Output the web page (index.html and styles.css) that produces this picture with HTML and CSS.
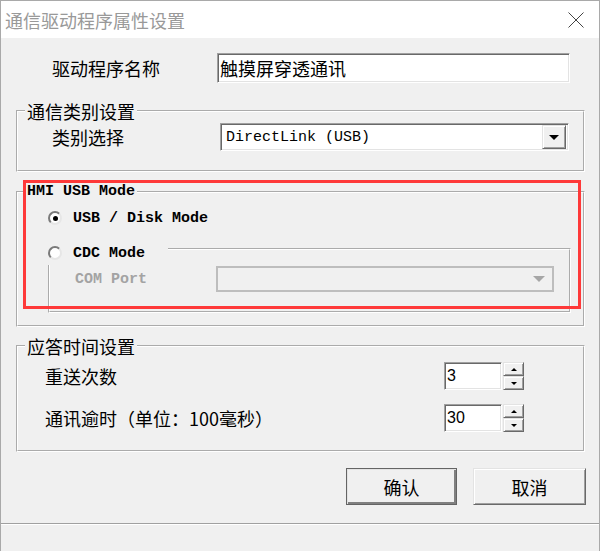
FILE: index.html
```html
<!DOCTYPE html>
<html lang="zh-CN">
  <head>
    <meta charset="UTF-8" />
    <meta name="viewport" content="width=device-width, initial-scale=1.0" />
    <title>通信驱动程序属性设置</title>
    <link rel="stylesheet" href="styles.css">
  </head>
  <body>
    <div class="window">
      <!-- Title bar -->
      <div class="titlebar">
        <span class="title">通信驱动程序属性设置</span>
        <svg class="close" width="16" height="16" viewBox="0 0 16 16">
          <path d="M0.5 0.5 L15.5 15.5 M15.5 0.5 L0.5 15.5" stroke="#444" stroke-width="1" fill="none" />
        </svg>
      </div>

      <div class="dialog">
        <div class="name-row">
          <span class="label name-label">驱动程序名称</span>
          <input type="text" class="sunken name-box" value="触摸屏穿透通讯" />
        </div>

        <fieldset class="group group-type">
          <legend>通信类别设置</legend>
          <div class="type-body">
            <span class="label type-label">类别选择</span>
            <div class="combo sunken">
              <span class="combo-text mono">DirectLink (USB)</span>
              <span class="combo-btn">
                <svg width="10" height="5" viewBox="0 0 10 5"><polygon points="0,0 10,0 5,5" fill="#000" /></svg>
              </span>
            </div>
          </div>
        </fieldset>

        <fieldset class="group group-usb">
          <legend class="mono bold">HMI USB Mode</legend>
          <div class="usb-body">
            <label class="radio mono bold"><span class="dot checked"></span>USB / Disk Mode</label>
            <div class="subgroup">
              <label class="radio mono bold cdc"><span class="dot"></span>CDC Mode</label>
              <div class="com-row">
                <span class="mono bold disabled com-label">COM Port</span>
                <div class="combo-off">
                  <svg width="12" height="6" viewBox="0 0 12 6"><polygon points="0,0 12,0 6,6" fill="#a6a6a6" /></svg>
                </div>
              </div>
            </div>
          </div>
        </fieldset>

        <fieldset class="group group-time">
          <legend>应答时间设置</legend>
          <div class="time-body">
            <div class="spin-row">
              <span class="label time-label">重送次数</span>
              <input type="text" class="sunken spin-input" value="3" />
              <div class="spin-btns">
                <span class="spin-btn"><span class="up"></span></span>
                <span class="spin-btn"><span class="down"></span></span>
              </div>
            </div>
            <div class="spin-row">
              <span class="label time-label">通讯逾时（单位：100毫秒）</span>
              <input type="text" class="sunken spin-input" value="30" />
              <div class="spin-btns">
                <span class="spin-btn"><span class="up"></span></span>
                <span class="spin-btn"><span class="down"></span></span>
              </div>
            </div>
          </div>
        </fieldset>

        <div class="button-row">
          <button class="btn default">确认</button>
          <button class="btn">取消</button>
        </div>
      </div>

      <div class="status"></div>

      <!-- red marker drawn over the USB mode group -->
      <div class="highlight"></div>
    </div>
  </body>
</html>
```

FILE: styles.css
```css
body {
  margin: 0;
  background: #fff;
  font-family: "Noto Sans CJK SC", sans-serif;
  color: #000;
}

.window {
  position: relative;
  width: 600px;
  height: 551px;
  box-sizing: border-box;
  border: 1px solid #a9a9a9;
  border-bottom: none;
  background: #f0f0f0;
}

.titlebar {
  height: 37px;
  background: #fff;
  display: flex;
  align-items: center;
  justify-content: space-between;
  padding: 0 15px 0 4px;
}

.title {
  font-size: 18px;
  line-height: 20px;
  color: #999;
}

.dialog {
  height: 485px;
  box-sizing: border-box;
  padding: 15px 0 0 15px;
}

.label {
  font-size: 18px;
  line-height: 20px;
  flex-shrink: 0;
}

.mono {
  font-family: "Liberation Mono", monospace;
  font-size: 15px;
}

.bold {
  font-weight: bold;
}

.disabled {
  color: #a3a3a3;
}

.sunken {
  box-sizing: border-box;
  border: 1px solid;
  border-color: #a0a0a0 #fff #fff #a0a0a0;
  box-shadow: inset 1px 1px 0 #696969, inset -1px -1px 0 #e3e3e3;
  background: #fff;
  outline: none;
  margin: 0;
}

/* name row */
.name-row {
  display: flex;
  align-items: center;
  height: 30px;
  padding-left: 36px;
}

.name-label {
  width: 165px;
}

.name-box {
  width: 353px;
  height: 30px;
  padding: 0 0 0 2px;
  font-family: "Noto Sans CJK SC", sans-serif;
  font-size: 18px;
}

/* group boxes */
.group {
  width: 569px;
  box-sizing: border-box;
  min-width: 0;
  margin: 0;
  padding: 0;
  border: 2px groove #fff;
}

.group legend {
  font-size: 18px;
  line-height: 20px;
  padding: 0 2px;
  margin-left: 7px;
  background: #f0f0f0;
}

.group legend.mono {
  font-size: 15px;
}

.group-type {
  margin-top: 18px;
}

.type-body {
  display: flex;
  align-items: center;
  padding: 2px 0 19px 34px;
}

.type-label {
  width: 168px;
}

.combo {
  width: 349px;
  height: 28px;
  display: flex;
  align-items: center;
  justify-content: space-between;
  padding: 2px;
}

.combo-text {
  padding-left: 3px;
}

.combo-btn {
  width: 24px;
  height: 24px;
  box-sizing: border-box;
  display: flex;
  align-items: center;
  justify-content: center;
  background: #f0f0f0;
  border: 1px solid;
  border-color: #e3e3e3 #696969 #696969 #e3e3e3;
  box-shadow: inset 1px 1px 0 #fff, inset -1px -1px 0 #a0a0a0;
}

/* usb mode */
.group-usb {
  margin-top: 10px;
}

.usb-body {
  padding: 6px 0 12px 30px;
}

.radio {
  display: flex;
  align-items: center;
  height: 20px;
  gap: 11px;
}

.dot {
  position: relative;
  width: 14px;
  height: 14px;
  box-sizing: border-box;
  border-radius: 50%;
  border: 2px solid;
  border-color: #7a7a7a #e6e6e6 #e6e6e6 #7a7a7a;
  background: #fff;
  flex-shrink: 0;
}

.dot.checked::after {
  content: "";
  position: absolute;
  left: 2.5px;
  top: 2.5px;
  width: 5px;
  height: 5px;
  border-radius: 50%;
  background: #000;
}

.subgroup {
  width: 523px;
  box-sizing: border-box;
  margin-top: 20px;
  border: 2px groove #fff;
  padding-bottom: 19px;
}

.radio.cdc {
  width: 120px;
  height: 24px;
  margin: -9px 0 0 -3px;
  padding-left: 1px;
  background: #f0f0f0;
}

.com-row {
  display: flex;
  align-items: center;
  height: 26px;
  margin-top: 1px;
  padding-left: 25px;
}

.com-label {
  width: 141px;
}

.combo-off {
  width: 338px;
  height: 26px;
  box-sizing: border-box;
  border: 2px solid #bdbdbd;
  display: flex;
  align-items: center;
  justify-content: flex-end;
  padding-right: 7px;
}

/* time settings */
.group-time {
  margin-top: 9px;
}

.time-body {
  display: flex;
  flex-direction: column;
  gap: 14px;
  padding: 6px 0 18px 27px;
}

.spin-row {
  display: flex;
  align-items: center;
  height: 28px;
}

.time-label {
  width: 399px;
}

.spin-input {
  width: 58px;
  height: 28px;
  padding: 0 0 0 2px;
  font-family: "Liberation Sans", sans-serif;
  font-size: 16px;
}

.spin-btns {
  display: flex;
  flex-direction: column;
  margin-left: 1px;
  height: 28px;
}

.spin-btn {
  width: 21px;
  height: 14px;
  box-sizing: border-box;
  display: flex;
  align-items: center;
  justify-content: center;
  border: 1px solid;
  border-color: #e3e3e3 #696969 #696969 #e3e3e3;
  box-shadow: inset 1px 1px 0 #fff, inset -1px -1px 0 #a0a0a0;
}

.up,
.down {
  width: 0;
  height: 0;
  border-left: 3px solid transparent;
  border-right: 3px solid transparent;
}

.up {
  border-bottom: 3px solid #000;
}

.down {
  border-top: 3px solid #000;
}

/* buttons */
.button-row {
  display: flex;
  gap: 16px;
  margin-top: 16px;
  padding-left: 330px;
}

.btn {
  height: 37px;
  width: 113px;
  font-family: "Noto Sans CJK SC", sans-serif;
  font-size: 18px;
  background: #f0f0f0;
  color: #000;
  padding: 0;
  border: 1px solid;
  border-color: #e3e3e3 #696969 #696969 #e3e3e3;
  box-shadow: inset 1px 1px 0 #fff, inset -1px -1px 0 #a0a0a0;
}

.btn.default {
  width: 111px;
  border: 1px solid #646464;
  box-shadow: inset 1px 1px 0 #e3e3e3, inset -2px -2px 0 #808080;
}

.status {
  height: 28px;
  box-sizing: border-box;
  border-top: 1px solid #a0a0a0;
  box-shadow: inset 0 1px 0 #fff;
}

.highlight {
  position: absolute;
  left: 22px;
  top: 179px;
  width: 558px;
  height: 129px;
  box-sizing: border-box;
  border: 3px solid #fe3939;
}
```
